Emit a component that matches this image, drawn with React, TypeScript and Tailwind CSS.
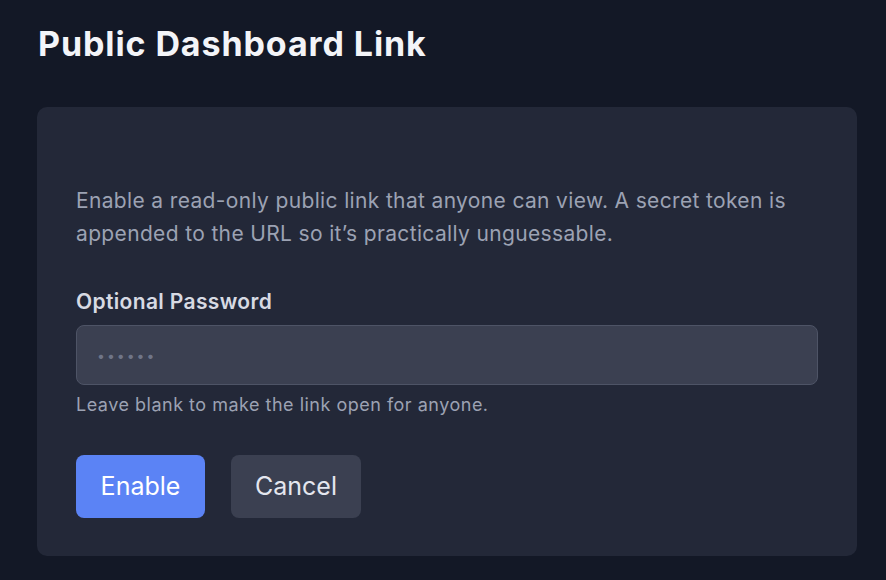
export default function App() {
  return (
    <div
      className="w-[886px] h-[580px] bg-[#131826] overflow-hidden pl-[37px] pr-[29px] pt-[22px]"
      style={{ fontFamily: "Inter, 'Noto Sans', sans-serif" }}
    >
      <h1 className="text-[34px] leading-[44px] font-bold text-[#f3f4f8] pl-px tracking-[0.9px]">
        Public Dashboard Link
      </h1>
      <div className="mt-[41px] rounded-[10px] bg-[#232838] px-[39px] pt-[77px] pb-[38px]">
        <p className="text-[21px] leading-[33px] text-[#9ca2b3] tracking-[0.35px]">
          Enable a read-only public link that anyone can view. A secret token is appended to the URL so it’s practically unguessable.
        </p>
        <label className="block mt-[38px] text-[21px] leading-[28px] font-semibold text-[#d7dae3] tracking-[0.35px]">
          Optional Password
        </label>
        <div className="mt-[9px] h-[60px] rounded-[8px] bg-[#3b4051] border border-[#4e5466] flex items-center px-[20px]">
          <span className="text-[14px] tracking-[2px] text-[#6f7588]">••••••</span>
        </div>
        <p className="mt-[8px] text-[18px] leading-[24px] text-[#9ca2b3] tracking-[0.5px]">
          Leave blank to make the link open for anyone.
        </p>
        <div className="mt-[38px] flex gap-[26px]">
          <button className="h-[63px] w-[129px] rounded-[8px] bg-[#5b83f5] text-white text-[25px] pt-px">
            Enable
          </button>
          <button className="h-[63px] w-[130px] rounded-[8px] bg-[#3b4051] text-[#e4e6ee] text-[25px] pt-px">
            Cancel
          </button>
        </div>
      </div>
    </div>
  );
}
